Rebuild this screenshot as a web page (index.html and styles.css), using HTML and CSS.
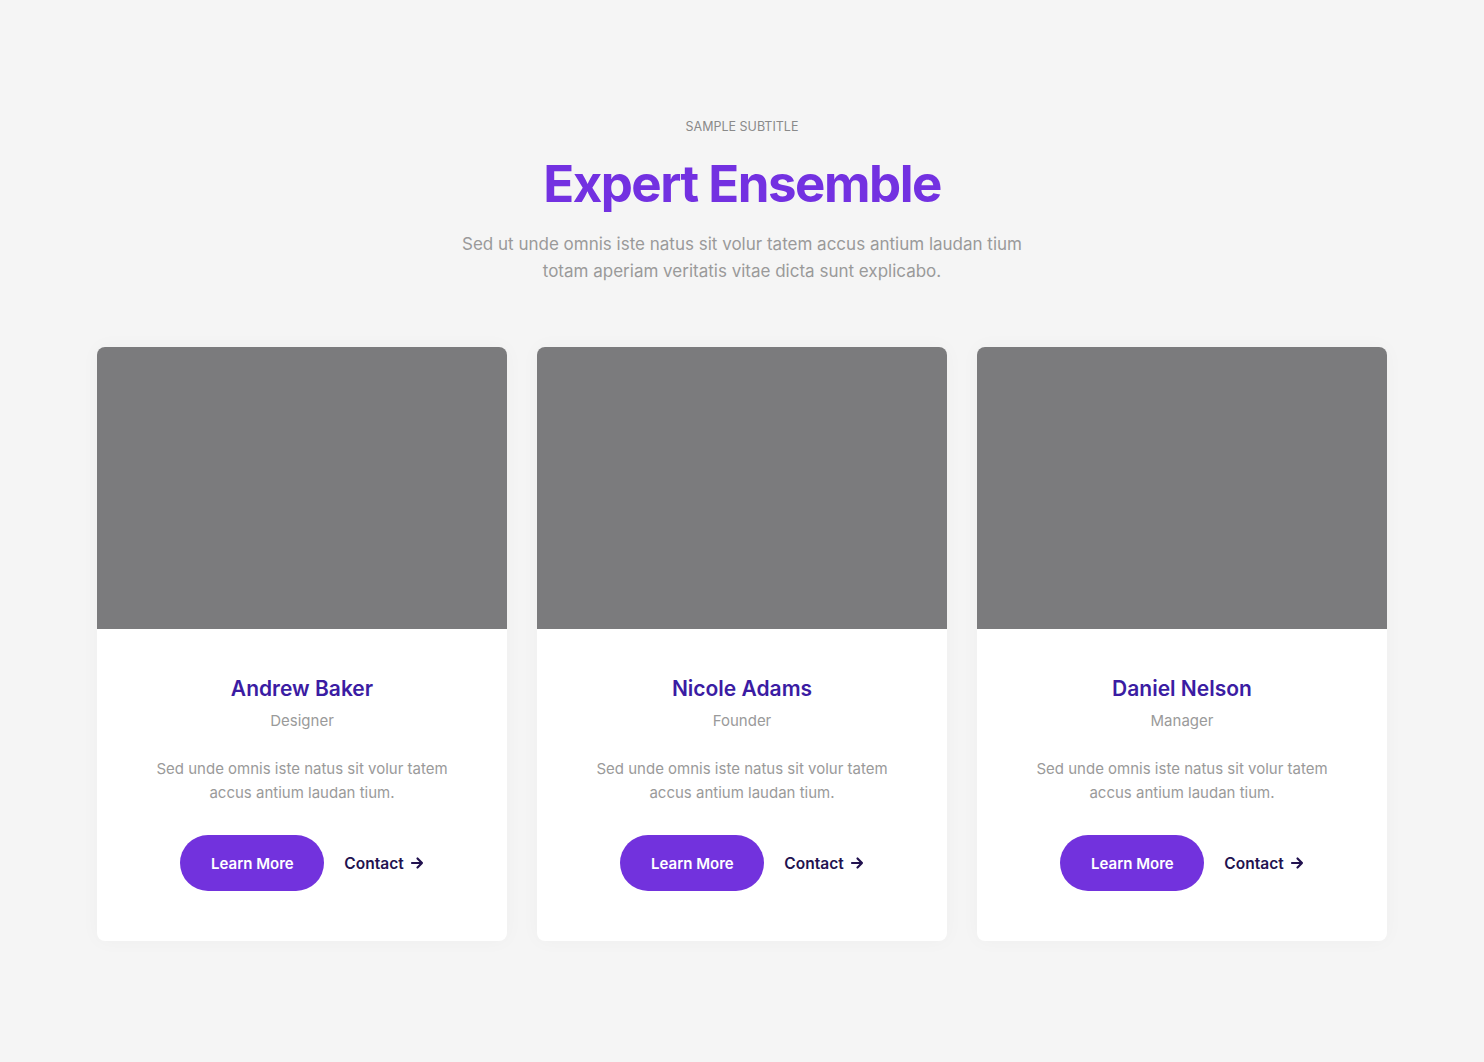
FILE: index.html
```html
<!DOCTYPE html>
<html lang="en">
  <head>
    <meta charset="UTF-8" />
    <meta name="viewport" content="width=device-width, initial-scale=1.0" />
    <title>Expert Ensemble</title>
    <link rel="stylesheet" href="styles.css">
  </head>
  <body>
    <section class="team">
      <header class="team-header">
        <p class="subtitle">Sample Subtitle</p>
        <h1 class="title">Expert Ensemble</h1>
        <p class="lead">
          Sed ut unde omnis iste natus sit volur tatem accus antium laudan tium<br />
          totam aperiam veritatis vitae dicta sunt explicabo.
        </p>
      </header>

      <div class="cards">
        <article class="card">
          <div class="card-photo"></div>
          <div class="card-body">
            <h2 class="card-name">Andrew Baker</h2>
            <p class="card-role">Designer</p>
            <p class="card-text">Sed unde omnis iste natus sit volur tatem<br />accus antium laudan tium.</p>
            <div class="card-actions">
              <a href="#" class="btn">Learn More</a>
              <a href="#" class="link">Contact
                <svg width="14" height="14" viewBox="0 0 14 14" fill="none" stroke="currentColor" stroke-width="2.2" stroke-linecap="round" stroke-linejoin="round"><path d="M2 7h10M7.5 2.5L12 7l-4.5 4.5"/></svg>
              </a>
            </div>
          </div>
        </article>

        <article class="card">
          <div class="card-photo"></div>
          <div class="card-body">
            <h2 class="card-name">Nicole Adams</h2>
            <p class="card-role">Founder</p>
            <p class="card-text">Sed unde omnis iste natus sit volur tatem<br />accus antium laudan tium.</p>
            <div class="card-actions">
              <a href="#" class="btn">Learn More</a>
              <a href="#" class="link">Contact
                <svg width="14" height="14" viewBox="0 0 14 14" fill="none" stroke="currentColor" stroke-width="2.2" stroke-linecap="round" stroke-linejoin="round"><path d="M2 7h10M7.5 2.5L12 7l-4.5 4.5"/></svg>
              </a>
            </div>
          </div>
        </article>

        <article class="card">
          <div class="card-photo"></div>
          <div class="card-body">
            <h2 class="card-name">Daniel Nelson</h2>
            <p class="card-role">Manager</p>
            <p class="card-text">Sed unde omnis iste natus sit volur tatem<br />accus antium laudan tium.</p>
            <div class="card-actions">
              <a href="#" class="btn">Learn More</a>
              <a href="#" class="link">Contact
                <svg width="14" height="14" viewBox="0 0 14 14" fill="none" stroke="currentColor" stroke-width="2.2" stroke-linecap="round" stroke-linejoin="round"><path d="M2 7h10M7.5 2.5L12 7l-4.5 4.5"/></svg>
              </a>
            </div>
          </div>
        </article>
      </div>
    </section>
  </body>
</html>
```

FILE: styles.css
```css
body {
  font-family: Inter, "Noto Sans", sans-serif;
  background-color: #f5f5f5;
  margin: 0;
  padding: 0;
  color: #333;
}

.team {
  padding: 119px 0 120px;
  display: flex;
  flex-direction: column;
  align-items: center;
}

.team-header {
  text-align: center;
}

.subtitle {
  margin: 0;
  font-size: 12.5px;
  line-height: 16px;
  text-transform: uppercase;
  color: #8a8a8a;
}

.title {
  margin: 19px 0 0;
  font-size: 51px;
  line-height: 60px;
  font-weight: 700;
  letter-spacing: -1.5px;
  color: #7331e1;
}

.lead {
  margin: 17px 0 0;
  font-size: 17px;
  line-height: 27px;
  color: #9a9a9a;
}

.cards {
  display: grid;
  grid-template-columns: repeat(3, 410px);
  gap: 30px;
  margin-top: 62px;
}

.card {
  background-color: white;
  border-radius: 8px;
  overflow: hidden;
  box-shadow: 0 0 20px rgba(0, 0, 0, 0.03);
}

.card-photo {
  height: 282px;
  background-color: #7b7b7d;
}

.card-body {
  padding: 46px 20px 50px;
  text-align: center;
}

.card-name {
  margin: 0;
  font-size: 21px;
  line-height: 28px;
  font-weight: 600;
  color: #3b1ca3;
}

.card-role {
  margin: 8px 0 0;
  font-size: 15px;
  line-height: 20px;
  color: #9a9a9a;
}

.card-text {
  margin: 26px 0 0;
  font-size: 15px;
  line-height: 24px;
  color: #9a9a9a;
}

.card-actions {
  margin-top: 30px;
  display: flex;
  justify-content: center;
  align-items: center;
  gap: 20px;
}

.btn {
  display: inline-flex;
  align-items: center;
  justify-content: center;
  width: 144px;
  height: 56px;
  border-radius: 28px;
  background-color: #7232dd;
  color: white;
  font-size: 15px;
  font-weight: 600;
  text-decoration: none;
}

.link {
  display: inline-flex;
  align-items: center;
  gap: 6px;
  font-size: 15.5px;
  font-weight: 600;
  color: #22124f;
  text-decoration: none;
}
```
